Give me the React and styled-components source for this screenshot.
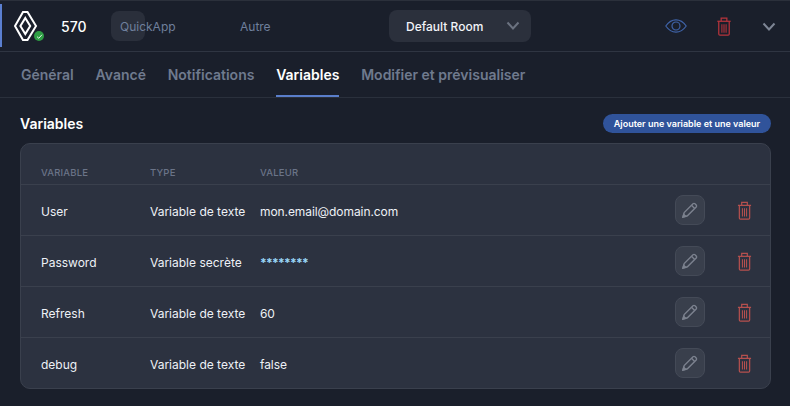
import React from "react";
import styled, { createGlobalStyle } from "styled-components";

const GlobalStyle = createGlobalStyle`
  html, body {
    margin: 0;
    background: #1a1f2b;
    font-family: Inter, "Noto Sans", sans-serif;
  }
`;

const Page = styled.div`
  width: 790px;
  height: 406px;
  overflow: hidden;
  box-sizing: border-box;
  border-top: 1px solid #2b303b;
`;

const Header = styled.header`
  position: relative;
  display: flex;
  align-items: center;
  height: 50px;
  border-bottom: 1px solid #2f3542;
  box-sizing: content-box;
`;

const ActiveBar = styled.span`
  position: absolute;
  left: 0;
  top: 3px;
  bottom: 4px;
  width: 2px;
  background: #5b7fd0;
`;

const Logo = styled.div`
  position: relative;
  display: flex;
  width: 24px;
  height: 30px;
  margin-left: 14px;
  margin-right: 23px;
`;

const Status = styled.span`
  position: absolute;
  left: 20px;
  top: 20px;
  width: 10px;
  height: 10px;
  border-radius: 50%;
  background: #2e9e44;
  display: flex;
  align-items: center;
  justify-content: center;
`;

const DeviceId = styled.span`
  width: 59px;
  color: #ffffff;
  font-size: 14px;
  font-weight: 500;
`;

const TypeCell = styled.div`
  position: relative;
  width: 120px;
  padding-top: 2px;
  color: #6f7f9c;
  font-size: 12px;
  line-height: 16px;
`;

const TypeChip = styled.span`
  position: absolute;
  left: -9px;
  top: -6px;
  width: 34px;
  height: 30px;
  border-radius: 8px;
  background: #2a2f3b;
`;

const TypeLabel = styled.span`
  position: relative;
`;

const RoomCell = styled.div`
  width: 149px;
  color: #6f7f9c;
  font-size: 12px;
`;

const RoomSelect = styled.div`
  display: flex;
  align-items: center;
  justify-content: space-between;
  width: 142px;
  height: 32px;
  padding: 0 11px 0 17px;
  box-sizing: border-box;
  border-radius: 8px;
  background: #2b303c;
  color: #f2f4f8;
  font-size: 12px;
  font-weight: 500;
`;

const HeaderActions = styled.div`
  display: flex;
  align-items: center;
  margin-left: 134px;
`;

const EyeButton = styled.span`
  display: flex;
  width: 22px;
  margin-right: 29px;
`;

const HeaderTrash = styled.span`
  display: flex;
  width: 16px;
  margin-right: 30px;
`;

const HeaderChevron = styled.span`
  display: flex;
  margin-top: 2px;
`;

const Tabs = styled.nav`
  display: flex;
  gap: 21.8px;
  height: 45px;
  padding-left: 21px;
  border-bottom: 1px solid #2a303c;
`;

const Tab = styled.span`
  display: flex;
  align-items: center;
  height: 45px;
  box-sizing: border-box;
  padding: 2px 0 0;
  font-size: 14px;
  font-weight: 600;
  color: ${(p) => (p.$active ? "#ffffff" : "#6f7a8e")};
  border-bottom: 2px solid ${(p) => (p.$active ? "#5a7ecb" : "transparent")};
`;

const Section = styled.section`
  padding: 16px 19px 0 20px;
`;

const SectionHead = styled.div`
  display: flex;
  align-items: center;
  justify-content: space-between;
  height: 19px;
  margin-bottom: 10px;
`;

const Title = styled.h2`
  margin: 0;
  color: #ffffff;
  font-size: 14px;
  font-weight: 600;
`;

const AddButton = styled.button`
  height: 19px;
  width: 168px;
  padding: 0;
  border: 0;
  border-radius: 10px;
  background: #30539a;
  color: #ffffff;
  font-family: inherit;
  font-size: 9px;
  font-weight: 600;
`;

const Card = styled.div`
  border: 1px solid #3a404d;
  border-radius: 10px;
  background: #2c3240;
  overflow: hidden;
`;

const Row = styled.div`
  display: grid;
  grid-template-columns: 109px 110px 1fr 30px 65px;
  align-items: center;
  height: ${(p) => (p.$head ? "40px" : "50px")};
  padding-left: 20px;
  border-bottom: ${(p) => (p.$last ? "0" : "1px solid #3a404d")};
  color: #eef1f6;
  font-size: 12px;
`;

const HeadCell = styled.span`
  color: #6b7488;
  font-size: 9.5px;
  font-weight: 500;
  letter-spacing: 0.2px;
  padding-top: 16px;
`;

const Cell = styled.span`
  padding-top: 2px;
`;

const Value = styled(Cell)`
  letter-spacing: -0.08px;
`;

const Secret = styled(Cell)`
  color: #9ad8f8;
  font-weight: 700;
  letter-spacing: -0.7px;
`;

const EditButton = styled.button`
  display: flex;
  align-items: center;
  justify-content: center;
  width: 30px;
  height: 30px;
  padding: 0;
  border: 1px solid #444a57;
  border-radius: 8px;
  background: #393f4c;
`;

const DeleteButton = styled.span`
  display: flex;
  justify-content: center;
  padding-left: 14px;
`;

const RenaultLogo = () => (
  <svg width="24" height="30" viewBox="0 0 24 30" fill="none" stroke="#ffffff" strokeWidth="2">
    <path d="M9 1 H13.5 L22 15 L13.5 29 H9 L1 15 Z" />
    <path d="M11.3 7 L16.2 15 L11.3 23 L6.4 15 Z" />
  </svg>
);

const Chevron = ({ color }) => (
  <svg width="14" height="14" viewBox="0 0 14 14" fill="none" stroke={color} strokeWidth="2">
    <path d="M1.5 3.5 L7 9.5 L12.5 3.5" />
  </svg>
);

const Eye = () => (
  <svg width="22" height="14" viewBox="0 0 22 14" fill="none" stroke="#3f63a8" strokeWidth="1.2">
    <path d="M0.8 7 C4 2.4 7.5 0.8 11 0.8 C14.5 0.8 18 2.4 21.2 7 C18 11.6 14.5 13.2 11 13.2 C7.5 13.2 4 11.6 0.8 7 Z" />
    <circle cx="11" cy="7" r="4" />
  </svg>
);

const Trash = ({ color, width, height }) => (
  <svg width={width} height={height} viewBox="0 0 16 20" fill="none" stroke={color} strokeWidth="1.3">
    <path d="M1 4.5 H15" />
    <path d="M5 4.5 V1.3 H11 V4.5" />
    <path d="M2.5 4.5 V18 Q2.5 19.2 3.7 19.2 H12.3 Q13.5 19.2 13.5 18 V4.5" />
    <path d="M5.8 7.5 V16.5 M8 7.5 V16.5 M10.2 7.5 V16.5" strokeWidth="1.1" />
  </svg>
);

const Pencil = () => (
  <svg width="16" height="16" viewBox="0 0 16 16" fill="none" stroke="#7b818e" strokeWidth="1.4">
    <path d="M1 15 L2.2 10.6 L11 1.8 Q12 1 13 1.8 L14.2 3 Q15 4 14.2 5 L5.4 13.8 Z" />
    <path d="M9.5 3.3 L12.7 6.5" />
    <path d="M1 15 L1.7 12.3 L3.7 14.3 Z" fill="#7b818e" />
  </svg>
);

const rows = [
  { name: "User", type: "Variable de texte", value: "mon.email@domain.com" },
  { name: "Password", type: "Variable secrète", value: "********", secret: true },
  { name: "Refresh", type: "Variable de texte", value: "60" },
  { name: "debug", type: "Variable de texte", value: "false" },
];

const tabs = ["Général", "Avancé", "Notifications", "Variables", "Modifier et prévisualiser"];

export default function App() {
  return (
    <Page>
      <GlobalStyle />
      <Header>
        <ActiveBar />
        <Logo>
          <RenaultLogo />
          <Status>
            <svg width="7" height="7" viewBox="0 0 8 8" fill="none" stroke="#ffffff" strokeWidth="1">
              <path d="M1.2 4.2 L3.2 6 L6.8 2" />
            </svg>
          </Status>
        </Logo>
        <DeviceId>570</DeviceId>
        <TypeCell>
          <TypeChip />
          <TypeLabel>QuickApp</TypeLabel>
        </TypeCell>
        <RoomCell>Autre</RoomCell>
        <RoomSelect>
          Default Room
          <Chevron color="#6b7280" />
        </RoomSelect>
        <HeaderActions>
          <EyeButton>
            <Eye />
          </EyeButton>
          <HeaderTrash>
            <Trash color="#b8343c" width={16} height={19} />
          </HeaderTrash>
          <HeaderChevron>
            <Chevron color="#7d8594" />
          </HeaderChevron>
        </HeaderActions>
      </Header>
      <Tabs>
        {tabs.map((tab) => (
          <Tab key={tab} $active={tab === "Variables"}>
            {tab}
          </Tab>
        ))}
      </Tabs>
      <Section>
        <SectionHead>
          <Title>Variables</Title>
          <AddButton>Ajouter une variable et une valeur</AddButton>
        </SectionHead>
        <Card>
          <Row $head>
            <HeadCell>VARIABLE</HeadCell>
            <HeadCell>TYPE</HeadCell>
            <HeadCell>VALEUR</HeadCell>
          </Row>
          {rows.map((row, index) => (
            <Row key={row.name} $last={index === rows.length - 1}>
              <Cell>{row.name}</Cell>
              <Cell>{row.type}</Cell>
              {row.secret ? <Secret>{row.value}</Secret> : <Value>{row.value}</Value>}
              <EditButton>
                <Pencil />
              </EditButton>
              <DeleteButton>
                <Trash color="#b5504e" width={15} height={19} />
              </DeleteButton>
            </Row>
          ))}
        </Card>
      </Section>
    </Page>
  );
}
